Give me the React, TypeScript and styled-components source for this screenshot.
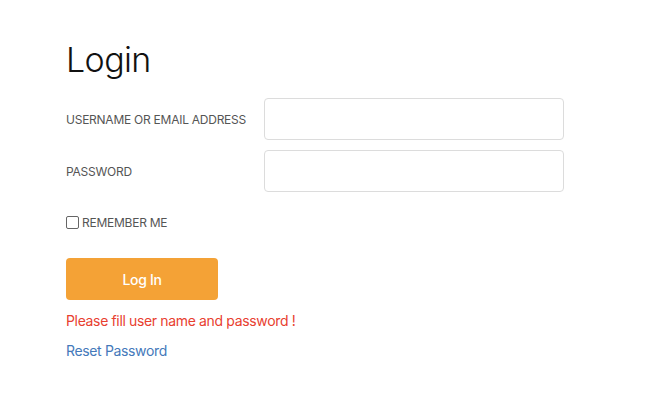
import { useState } from 'react'
import styled, { createGlobalStyle } from 'styled-components'

const GlobalStyle = createGlobalStyle`
  html, body {
    margin: 0;
    padding: 0;
    background: #ffffff;
  }
  body {
    font-family: Inter, "Noto Sans", sans-serif;
  }
`

const Page = styled.div`
  box-sizing: border-box;
  width: 100%;
  min-height: 100vh;
  padding: 38px 66px 0;
`

const Title = styled.h1`
  margin: 0 0 16px;
  font-size: 34px;
  font-weight: 300;
  line-height: 44px;
  color: #111;
  letter-spacing: -0.6px;
`

const Form = styled.form`
  display: flex;
  flex-direction: column;
  align-items: flex-start;
`

const FieldRow = styled.div`
  display: grid;
  grid-template-columns: 198px 300px;
  align-items: center;
  margin-bottom: 10px;
`

const Label = styled.label`
  font-size: 12px;
  color: #555;
  letter-spacing: -0.25px;
  text-transform: uppercase;
`

const Input = styled.input`
  box-sizing: border-box;
  height: 42px;
  width: 300px;
  border: 1px solid #dcdcdc;
  border-radius: 4px;
  padding: 0 12px;
  font-size: 14px;
  font-family: inherit;
  outline: none;
`

const CheckRow = styled.label`
  display: flex;
  align-items: center;
  gap: 3px;
  margin-top: 13px;
  font-size: 12px;
  color: #555;
  letter-spacing: -0.25px;
  text-transform: uppercase;
`

const Check = styled.input`
  box-sizing: border-box;
  appearance: none;
  margin: 0;
  width: 13px;
  height: 13px;
  border: 1px solid #666;
  border-radius: 2px;
  background: #fff;
`

const SubmitButton = styled.button`
  margin-top: 28px;
  width: 152px;
  height: 42px;
  border: none;
  border-radius: 4px;
  background: #f4a236;
  color: #fff;
  font-family: inherit;
  font-size: 14px;
  font-weight: 500;
  letter-spacing: -0.3px;
  cursor: pointer;
`

const ErrorText = styled.div`
  margin-top: 12px;
  font-size: 14px;
  letter-spacing: -0.35px;
  color: #e8402f;
`

const ResetLink = styled.a`
  margin-top: 13px;
  font-size: 14px;
  letter-spacing: -0.35px;
  color: #4479ba;
  text-decoration: none;
`

function App() {
  const [remember, setRemember] = useState(false)

  return (
    <Page>
      <GlobalStyle />
      <Title>Login</Title>
      <Form onSubmit={(e) => e.preventDefault()}>
        <FieldRow>
          <Label htmlFor="user">Username or email address</Label>
          <Input id="user" type="text" />
        </FieldRow>
        <FieldRow>
          <Label htmlFor="pass">Password</Label>
          <Input id="pass" type="password" />
        </FieldRow>
        <CheckRow>
          <Check type="checkbox" checked={remember} onChange={() => setRemember((v) => !v)} />
          Remember me
        </CheckRow>
        <SubmitButton type="submit">Log In</SubmitButton>
        <ErrorText>Please fill user name and password !</ErrorText>
        <ResetLink href="#">Reset Password</ResetLink>
      </Form>
    </Page>
  )
}

export default App
